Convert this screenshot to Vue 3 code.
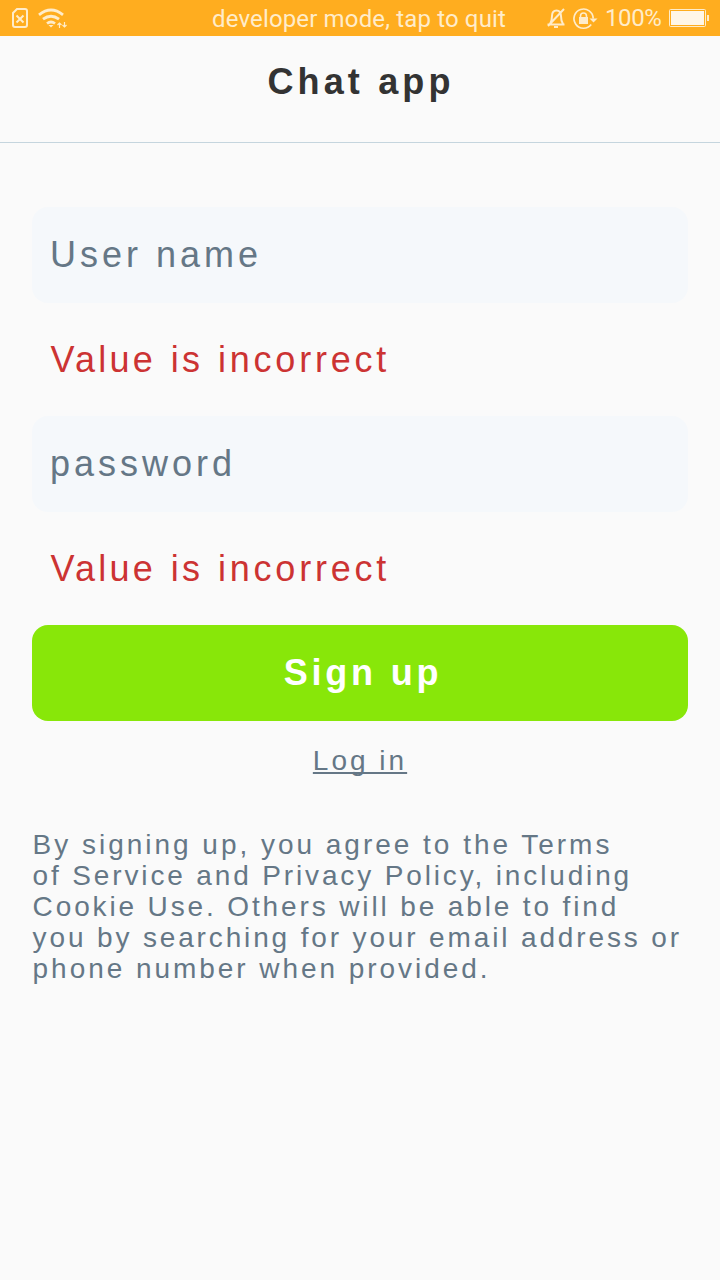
<script setup>
const terms = [
  { text: 'By signing up, you agree to the Terms', spacing: 2.98 },
  { text: 'of Service and Privacy Policy, including', spacing: 2.86 },
  { text: 'Cookie Use. Others will be able to find', spacing: 2.87 },
  { text: 'you by searching for your email address or', spacing: 2.86 },
  { text: 'phone number when provided.', spacing: 2.95 },
]
</script>

<template>
  <main class="screen">
    <div class="status">
      <svg width="70" height="36" viewBox="0 0 70 36" fill="none" stroke="#ffecca" stroke-width="2">
        <path d="M17 9h8q2 0 2 2v14q0 2-2 2H15q-2 0-2-2V13zM16.500 15.500l7 7M23.500 15.500l-7 7" />
        <path d="M39 14.800q12-9.600 24 0M43 19.200q8-6 16 0M47 23.500q4-3 8 0" stroke-width="2.800" />
        <path d="M48.500 25l2.500 2.500 2.500-2.500z" fill="#ffecca" stroke="none" />
        <path d="M59.500 28v-5M57.500 25l2-2 2 2M64.500 22v5M62.500 25l2 2 2-2" stroke-width="1.200" />
      </svg>
      <span class="dev">developer mode, tap to quit</span>
      <div class="right">
        <svg width="54" height="36" viewBox="546 0 54 36" fill="none" stroke="#ffecca" stroke-width="2">
          <path d="M547.500 24.500h17M550 24q2-3 2-8 0-5.500 4.500-5.500 4.500 0 4.500 5.500 0 5 2 8M564 9l-16 17" />
          <path d="M554 27h4" />
          <path d="M591.200 24.500A9.600 9.600 0 1 1 593.200 18.500" stroke-width="1.700" />
          <path d="M589.500 18.500h8l-4 4z" fill="#ffecca" stroke="none" />
          <path d="M579 17h9v7h-9z" fill="#ffecca" stroke="none" />
          <path d="M580.500 17.500v-1.500q0-3 3-3t3 3v1.500" stroke-width="1.600" />
        </svg>
        <span class="percent">100%</span>
        <svg width="42" height="36" viewBox="668 0 42 36">
          <rect x="669.500" y="9.500" width="36" height="17" rx="1" fill="none" stroke="#ffecca" />
          <path d="M671 11h33v14h-33z" fill="#fff6e8" />
          <path d="M707 15h2v6h-2z" fill="#ffecca" />
        </svg>
      </div>
    </div>
    <header><h1>Chat app</h1></header>
    <section class="form">
      <div class="field">User name</div>
      <p class="error">Value is <span>incorrect</span></p>
      <div class="field">password</div>
      <p class="error">Value is <span>incorrect</span></p>
      <button>Sign up</button>
      <a class="login">Log in</a>
      <div class="terms">
        <div v-for="line in terms" :key="line.text" :style="{ letterSpacing: line.spacing + 'px' }">{{ line.text }}</div>
      </div>
    </section>
  </main>
</template>

<style>
body { background: #fafafa; }
</style>
<style scoped>
.screen { height: 1280px; overflow: hidden; background: #fafafa; font-family: "Liberation Sans", Arial, sans-serif; }
.status { height: 36px; display: grid; grid-template-columns: 212px 1fr auto; background: #ffad1f; color: #ffecca; font: 24px/37px Roboto, sans-serif; }
.dev { line-height: 39px; letter-spacing: 0.15px; white-space: nowrap; }
.right { display: flex; padding-right: 10px; }
.percent { width: 63px; margin-left: 5px; letter-spacing: -0.4px; }
header { height: 106px; border-bottom: 1px solid #c5d5de; display: flex; justify-content: center; }
h1 { margin: 25px 0 0 2px; font-size: 36px; line-height: 41px; letter-spacing: 4.15px; color: #333; }
.form { padding: 64px 32px 0; display: flex; flex-direction: column; }
.field { height: 96px; box-sizing: border-box; border-radius: 16px; background: #f5f8fb; padding: 0 18px; font-size: 36px; line-height: 96px; letter-spacing: 4px; color: #657786; }
.error { margin: 0; padding: 0 18.5px; height: 113px; line-height: 114px; font-size: 36px; letter-spacing: 3.2px; word-spacing: 1.6px; color: #cc3333; }
.error span { letter-spacing: 3.8px; }
button { height: 96px; border: 0; border-radius: 16px; padding: 0 0 0 6px; background: #88e709; color: #fff; font: bold 36px/96px "Liberation Sans", Arial, sans-serif; letter-spacing: 3.8px; }
.login { align-self: center; margin-top: 24px; font-size: 28px; line-height: 32px; letter-spacing: 3px; color: #657786; text-decoration: underline 2px; text-decoration-skip-ink: none; text-underline-offset: 2px; }
.terms { margin-top: 52px; padding-left: 0.6px; font-size: 28px; line-height: 31px; white-space: nowrap; color: #657786; }
</style>
